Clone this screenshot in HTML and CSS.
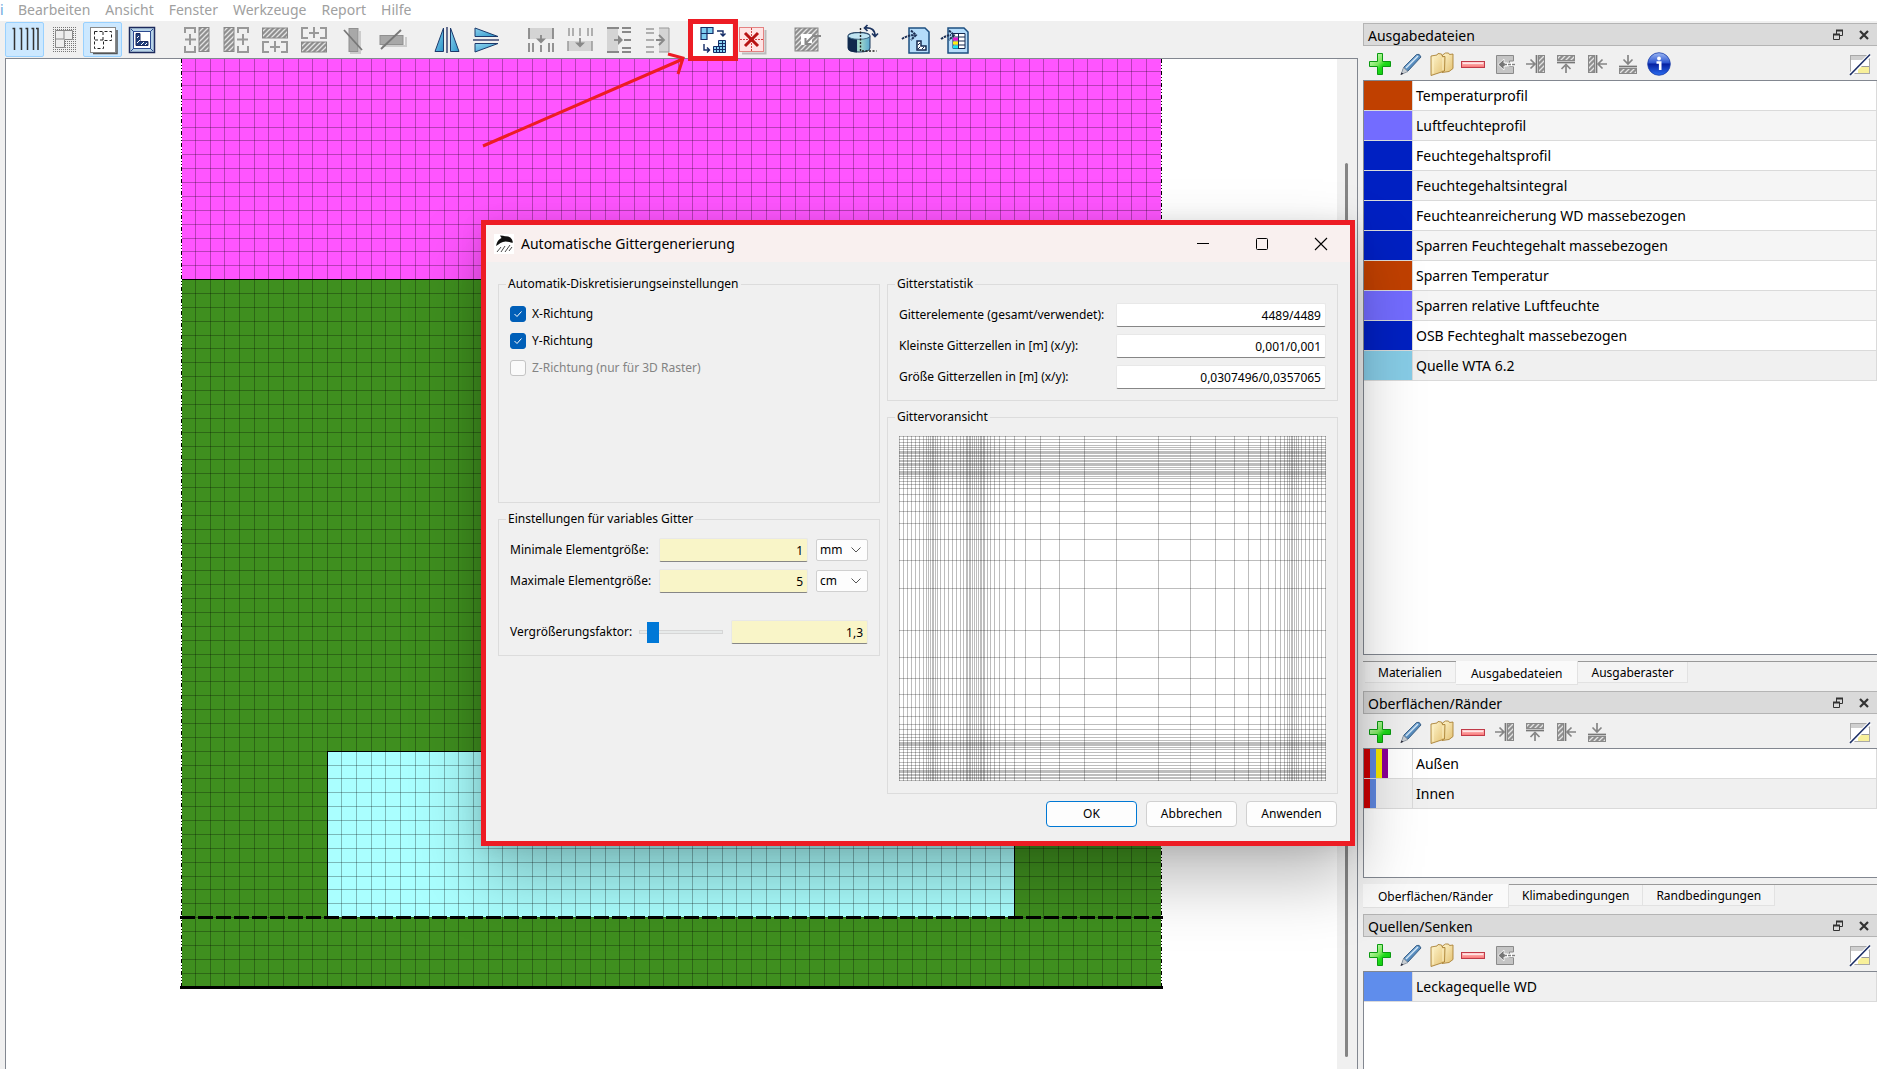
FILE: index.html
```html
<!DOCTYPE html>
<html lang="de">
<head>
<meta charset="utf-8">
<title>Automatische Gittergenerierung</title>
<link rel="stylesheet" href="styles.css">
</head>
<body>
<svg class="defs" width="0" height="0" aria-hidden="true">
  <defs>
    <linearGradient id="g-plus" x1="0" y1="0" x2="1" y2="1"><stop offset="0" stop-color="#e4ffd8"/><stop offset=".45" stop-color="#7de860"/><stop offset=".6" stop-color="#1fdc1a"/><stop offset="1" stop-color="#08b808"/></linearGradient>
    <linearGradient id="g-minus" x1="0" y1="0" x2="0" y2="1"><stop offset="0" stop-color="#ffd0d0"/><stop offset="1" stop-color="#f87070"/></linearGradient>
    <linearGradient id="g-folder" x1="0" y1="0" x2="1" y2="1"><stop offset="0" stop-color="#fff6cf"/><stop offset="1" stop-color="#e3c070"/></linearGradient>
    <linearGradient id="g-pen" x1="0" y1="0" x2="1" y2="1"><stop offset="0" stop-color="#a8cbe8"/><stop offset=".5" stop-color="#5c92c4"/><stop offset="1" stop-color="#27507e"/></linearGradient>
    <linearGradient id="g-info" x1="0" y1="0" x2="0" y2="1"><stop offset="0" stop-color="#9db8f4"/><stop offset=".45" stop-color="#2c55d0"/><stop offset=".5" stop-color="#0620a0"/><stop offset="1" stop-color="#2a6cf0"/></linearGradient>
    <linearGradient id="g-cyl" x1="0" y1="0" x2="1" y2="0"><stop offset="0" stop-color="#2d8fc4"/><stop offset=".5" stop-color="#a8dcc8"/><stop offset="1" stop-color="#5aa8d0"/></linearGradient>
    <linearGradient id="g-tri" x1="0" y1="0" x2="1" y2="1"><stop offset="0" stop-color="#8fd4f0"/><stop offset="1" stop-color="#2c94c8"/></linearGradient>
    <pattern id="p-hatch" width="5" height="5" patternUnits="userSpaceOnUse"><rect width="5" height="5" fill="#8f8f8f"/><path d="M-1 6L6-1M-1 1L1-1M4 6L6 4" stroke="#e4e4e4" stroke-width="1.3"/></pattern>
    <pattern id="p-dots" width="2" height="2" patternUnits="userSpaceOnUse"><rect width="1" height="1" fill="#777"/></pattern>

    <symbol id="i-plus" viewBox="0 0 24 24"><path d="M9.500 1.500h5v8h8v5h-8v8h-5v-8h-8v-5h8z" fill="url(#g-plus)" stroke="#0a9a10"/></symbol>
    <symbol id="i-pen" viewBox="0 0 24 24"><path d="M3 21l2-6L17.500 2.500q3-1.500 4.500 2.500L9 19z" fill="url(#g-pen)" stroke="#3d6288"/><path d="M7 16L19 4" stroke="#d6e8f6" stroke-width="1.500"/><path d="M2 22.500l2.500-7 4.500 4z" fill="#c8cdd2" stroke="#7c8894" stroke-width=".7"/><path d="M1.500 23l1-2.500 2 1.200z" fill="#223"/></symbol>
    <symbol id="i-folder" viewBox="0 0 24 24"><path d="M12.500 3l3-2h3l1 1.500 3.500-.5v14.500l-4 3-7 1z" fill="url(#g-folder)" stroke="#a98136" stroke-width=".9"/><path d="M1 4l6-1 1-1.500 3.500.5 1 2.500h2.500l-.5 14.500L4 22.500l-3 1z" fill="url(#g-folder)" stroke="#a98136" stroke-width=".9"/><path d="M3 21.500V6.500M13 6v12" fill="none" stroke="#fff3c8"/></symbol>
    <symbol id="i-minus" viewBox="0 0 24 24"><rect x=".5" y="9.500" width="23" height="6" fill="url(#g-minus)" stroke="#c03a48"/><rect x="2" y="10.500" width="20" height="1.500" fill="#ffe4e4"/></symbol>
    <symbol id="i-assign" viewBox="0 0 24 24"><path d="M4.500 21.500v-18h17v5.500h-4v5.500h4v7z" fill="#c4c4c4" stroke="#8a8a8a"/><path d="M6 12.500l6-5.500v4h3v3h-3V18z" fill="#777" stroke="#fff" stroke-width=".8"/><path d="M13 12.500h10" stroke="#fff" stroke-width="3.500"/><path d="M12 12.500h11" stroke="#808080" stroke-width="1.500" stroke-dasharray="3 1"/></symbol>
    <symbol id="i-left" viewBox="0 0 24 24"><path d="M3 12h8M7.500 7.500L12 12l-4.500 4.500" fill="none" stroke="#858585" stroke-width="1.700"/><path d="M13.500 3v18" stroke="#777" stroke-width="1.700"/><rect x="15.500" y="3.500" width="6" height="17" fill="url(#p-hatch)" stroke="#888"/></symbol>
    <symbol id="i-top" viewBox="0 0 24 24"><rect x="3.500" y="3.500" width="17" height="5" fill="url(#p-hatch)" stroke="#888"/><path d="M3 10.500h18" stroke="#777" stroke-width="1.700"/><path d="M12 21v-7M7.500 17l4.500-4.500 4.500 4.500" fill="none" stroke="#858585" stroke-width="1.700"/></symbol>
    <symbol id="i-right" viewBox="0 0 24 24"><rect x="3.500" y="3.500" width="6" height="17" fill="url(#p-hatch)" stroke="#888"/><path d="M11.500 3v18" stroke="#777" stroke-width="1.700"/><path d="M22 12h-8M17.500 7.500L13 12l4.500 4.500" fill="none" stroke="#858585" stroke-width="1.700"/></symbol>
    <symbol id="i-bottom" viewBox="0 0 24 24"><path d="M12 3v8M7.500 7.500L12 12l4.500-4.500" fill="none" stroke="#858585" stroke-width="1.700"/><path d="M3 14.500h18" stroke="#777" stroke-width="1.700"/><rect x="3.500" y="16.500" width="17" height="5" fill="url(#p-hatch)" stroke="#888"/></symbol>
    <symbol id="i-info" viewBox="0 0 24 24"><circle cx="12" cy="12" r="11.300" fill="url(#g-info)" stroke="#1c3fa8" stroke-width=".8"/><circle cx="12" cy="6.500" r="1.900" fill="#fff"/><path d="M9.500 10.500h3.700V18" fill="none" stroke="#fff" stroke-width="2.600"/></symbol>
    <symbol id="i-edit" viewBox="0 0 24 24"><rect x="2.500" y="3.500" width="19" height="18" fill="#fff" stroke="#a8a8a8"/><rect x="3" y="4" width="18" height="4" fill="#cfcfcf"/><rect x="10" y="15" width="11" height="6" fill="#f8f09a"/><path d="M12 14.500h9" stroke="#999"/><path d="M3 22L22 3" stroke="#fff" stroke-width="4"/><path d="M2 23L22 2.500" stroke="#1c2f66" stroke-width="1.600"/></symbol>
    <symbol id="i-float" viewBox="0 0 12 12"><path d="M4.500 1.500h6v5h-6z" fill="none" stroke="#333"/><path d="M4 1.500h7" stroke="#333" stroke-width="2"/><path d="M1.500 5.500h6v5h-6z" fill="#dadada" stroke="#333"/><path d="M1 5.500h7" stroke="#333" stroke-width="2"/></symbol>
    <symbol id="i-close" viewBox="0 0 12 12"><path d="M2 2l8 8M10 2l-8 8" stroke="#333" stroke-width="2.200"/></symbol>
  </defs>
</svg>

<div class="app">
  <nav class="menubar">
    <a class="cut" href="#">i</a><a href="#">Bearbeiten</a><a href="#">Ansicht</a><a href="#">Fenster</a><a href="#">Werkzeuge</a><a href="#">Report</a><a href="#">Hilfe</a>
  </nav>

  <div class="workspace">
    <main class="editor">
      <div class="toolbar" role="toolbar">
        <div class="group">
          <button class="active" aria-label="Raster"><svg viewBox="0 0 26 26"><path d="M.5 1.500h2V23M7.500 1.500h2V23M13.500 1.500h2V23M19.500 1.500h2V23M24 1.500h2V23" fill="none" stroke="#333" stroke-width="1.500"/></svg></button>
          <button aria-label="Material"><svg viewBox="0 0 26 26"><rect x="1" width="25" height="25" fill="url(#p-dots)"/><path d="M4.500 3.500h17v9h-8v8h-9z" fill="#eee" stroke="#888"/><path d="M13 4v8M5 12h8" stroke="#888"/></svg></button>
          <button class="active" aria-label="Raster im Bauteil"><svg viewBox="0 0 26 26"><path d="M3 26.500h24V3" fill="none" stroke="#555" stroke-width="1.500"/><rect x=".5" y=".5" width="25" height="25" fill="#fff" stroke="#888"/><path d="M4.500 4.500h17v9h-8v8h-9zM13 5v8M5 13h8" fill="none" stroke="#222" stroke-dasharray="3 2"/></svg></button>
          <button aria-label="Ränder"><svg viewBox="0 0 26 26"><rect x=".5" y=".5" width="25" height="25" fill="#b8d4e8" stroke="#1c2a5c" stroke-width="1.500"/><path d="M2 2l3 3M24 2l-3 3M2 24l3-3M24 24l-3-3" stroke="#2c4a90"/><rect x="4.500" y="4.500" width="17" height="17" fill="#fff" stroke="#2c4a90"/><path d="M7 6.500h4v8h8v4H7z" fill="#20407c" stroke="#1c2a5c"/><path d="M8 11l2-2M8 16l3-3M12 18l3-3M16 18l2-2" stroke="#fff"/></svg></button>
        </div>
        <div class="group">
          <button aria-label="Spalte links"><svg viewBox="0 0 26 26"><path d="M1 6V1h10v5M1 19v6h10v-6M6 7v11M1 12.500h11" fill="none" stroke="#999" stroke-width="2"/><rect x="15" y=".5" width="10" height="24" fill="url(#p-hatch)" stroke="#888"/></svg></button>
          <button aria-label="Spalte rechts"><svg viewBox="0 0 26 26"><path d="M15 6V1h10v5M15 19v6h10v-6M20 7v11M14 12.500h11" fill="none" stroke="#999" stroke-width="2"/><rect x="1" y=".5" width="10" height="24" fill="url(#p-hatch)" stroke="#888"/></svg></button>
          <button aria-label="Zeile oben"><svg viewBox="0 0 26 26"><rect x=".5" y="1" width="25" height="10" fill="url(#p-hatch)" stroke="#888"/><path d="M7 15H1v10h6M19 15h6v10h-6M13 14v11M8 20h10" fill="none" stroke="#999" stroke-width="2"/></svg></button>
          <button aria-label="Zeile unten"><svg viewBox="0 0 26 26"><rect x=".5" y="15" width="25" height="10" fill="url(#p-hatch)" stroke="#888"/><path d="M7 1H1v10h6M19 1h6v10h-6M13 0v11M8 6h10" fill="none" stroke="#999" stroke-width="2"/></svg></button>
          <button aria-label="Spalte löschen"><svg viewBox="0 0 26 26"><path d="M10 26h10V4" fill="none" stroke="#ccc" stroke-width="2"/><rect x="9" y="1.500" width="9" height="23" fill="#a8a8a8" stroke="#909090"/><path d="M4 3l18 20" stroke="#777" stroke-width="1.800"/></svg></button>
          <button aria-label="Zeile löschen"><svg viewBox="0 0 26 26"><path d="M3 19h24v-9" fill="none" stroke="#ccc" stroke-width="2"/><rect x="1" y="8.500" width="23" height="9" fill="#a8a8a8" stroke="#909090"/><path d="M2 22L22 3" stroke="#777" stroke-width="1.800"/></svg></button>
        </div>
        <div class="group">
          <button aria-label="Horizontal spiegeln"><svg viewBox="0 0 26 26"><path d="M13 0v26" stroke="#1c2a5c" stroke-width="1.300"/><path d="M9.500 1v23.500H1z" fill="url(#g-tri)" stroke="#1c3a6c"/><path d="M16.500 1v23.500H25z" fill="url(#g-tri)" stroke="#1c3a6c"/></svg></button>
          <button aria-label="Vertikal spiegeln"><svg viewBox="0 0 26 26"><path d="M0 13h26" stroke="#1c2a5c" stroke-width="1.300"/><path d="M2 9.500h23L2 1z" fill="url(#g-tri)" stroke="#1c3a6c"/><path d="M2 16.500h23L2 25z" fill="url(#g-tri)" stroke="#1c3a6c"/></svg></button>
        </div>
        <div class="group">
          <button aria-label="Spalten verfeinern"><svg viewBox="0 0 26 26"><rect x="1" y="1" width="24" height="11" fill="#d4d4d4"/><path d="M1 12V1M25 12V1M1 16v9M5 16v9M13 18v7M21 16v9M25 16v9" stroke="#888" stroke-width="1.800"/><path d="M13 8v6" stroke="#888" stroke-width="1.800"/><path d="M8 11.500h10l-5 5z" fill="#888"/></svg></button>
          <button aria-label="Spalten vergröbern"><svg viewBox="0 0 26 26"><rect x="1" y="14" width="24" height="10" fill="#d4d4d4"/><path d="M1 14v10M25 14v10M2 1v8M6 1v8M13 1v8M21 1v8M25 1v8" stroke="#999" stroke-width="1.500"/><path d="M13 11v6" stroke="#888" stroke-width="1.800"/><path d="M8 15.500h10l-5 5z" fill="#888"/></svg></button>
          <button aria-label="Zeilen verfeinern"><svg viewBox="0 0 26 26"><rect x="1" y="1" width="11" height="24" fill="#d4d4d4"/><path d="M1 1h12M1 25h12M16 1h9M16 5h9M18 13h7M16 21h9M16 25h9" stroke="#888" stroke-width="1.800"/><path d="M8 13h6" stroke="#888" stroke-width="1.800"/><path d="M12 8v10l5-5z" fill="#888"/></svg></button>
          <button aria-label="Zeilen vergröbern"><svg viewBox="0 0 26 26"><rect x="14" y="1" width="10" height="24" fill="#d4d4d4"/><path d="M14 1h10v24H14" fill="none" stroke="#999"/><path d="M1 2h8M1 6h8M1 13h8M1 20h8M1 25h8" stroke="#999" stroke-width="1.500"/><path d="M11 13h8M14 8l5 5-5 5" fill="none" stroke="#888" stroke-width="1.800"/></svg></button>
        </div>
        <div class="group">
          <button class="hot" aria-label="Automatische Gittergenerierung"><svg viewBox="0 0 26 26"><path d="M1 .5h12v6H7v6H1z" fill="#7ccdf0" stroke="#142c66" stroke-width="1.200"/><path d="M7 1v6M1 6.500h6" stroke="#142c66" stroke-width="1.200"/><path d="M17 4h6v5M20.500 6.500L23 9l2.500-2.500M4 17v6h5M7 20.500L9.500 23 7 25.500" fill="none" stroke="#142c66" stroke-width="1.400"/><path d="M18.500 13.500h7v12h-12v-6h5z" fill="#8ad4f4" stroke="#142c66"/><path d="M14 22.500h11M18 19.500h7M19 16.500h6M16.500 20v5M19.500 19v6M22.500 14v11" stroke="#142c66"/></svg></button>
          <button aria-label="Raster löschen"><svg viewBox="0 0 26 26"><path d="M3 26.500h23.500V3" fill="none" stroke="#bbb" stroke-width="2"/><rect x="0" y="0" width="25" height="25" fill="#ffe4e4"/><path d="M.5.500h24v24H.5z" fill="none" stroke="#c82020" stroke-dasharray="1 1"/><path d="M12.500 1v24M1 12.500h24" stroke="#d04040" stroke-dasharray="2 1"/><path d="M6 6l13 13M19 6L6 19" stroke="#b81414" stroke-width="3"/></svg></button>
        </div>
        <div class="group">
          <button aria-label="Bereich füllen"><svg viewBox="0 0 26 26"><rect x="1" y="1" width="23" height="23" fill="url(#p-hatch)" stroke="#888"/><rect x="7" y="7" width="11" height="11" fill="#fff"/><path d="M27 9h-8l-7 7M11.500 11v6h6" fill="none" stroke="#888" stroke-width="2"/></svg></button>
        </div>
        <div class="group">
          <button aria-label="Achse drehen"><svg viewBox="0 0 26 26"><path d="M-1 9q0-3.500 11-3.500T21 9v12q0 4-11 4-11 0-11-4z" fill="url(#g-cyl)" stroke="#1c3a5c"/><path d="M-1 10q3 2.500 9 2.500V25.500q-9-.5-9-4z" fill="#10284c"/><ellipse cx="10" cy="9" rx="11" ry="3.300" fill="#bfe4f2" stroke="#1c3a5c" stroke-width=".7"/><path d="M11.500 1v23h16" fill="none" stroke="#222" stroke-width="1.400" stroke-dasharray="2 1.500"/><path d="M16 1q10-1 10 8M18.500-2l-3 3 3 3M23 6.500l3 3 3-3" fill="none" stroke="#1c3460" stroke-width="1.700"/></svg></button>
        </div>
        <div class="group">
          <button aria-label="Bauteil exportieren"><svg viewBox="0 0 26 26"><path d="M5 1h16l4 4v21H5z" fill="#b4dcfa" stroke="#1d4f80" stroke-width="1.500"/><path d="M-2 12q5-3.500 12-4M7 3.500L12 8l-5 5" fill="none" stroke="#1c2f55" stroke-width="2" stroke-dasharray="2.500 .8"/><path d="M13 14h4v5h5v4h-9z" fill="#fff" stroke="#142850" stroke-width="1.500"/><path d="M14 18l2-2M14 22l2-2M18 22l2-2" stroke="#142850"/></svg></button>
          <button aria-label="Tabelle exportieren"><svg viewBox="0 0 26 26"><path d="M5 1h16l4 4v21H5z" fill="#b4dcfa" stroke="#1d4f80" stroke-width="1.500"/><path d="M10 6.500h12v15H10zM10 10h12M10 14h12M10 18h12M15.500 6v15" fill="#fff" stroke="#142850"/><path d="M10 10.500h5v3h-5z" fill="#e018d0"/><path d="M10 14.500h5v3h-5z" fill="#ffee10"/><path d="M10 18.500h5v3h-5z" fill="#18e0f0"/><path d="M-2 12q5-3.500 10-4M6 3.500L11 8l-5 5" fill="none" stroke="#1c2f55" stroke-width="2" stroke-dasharray="2.500 .8"/></svg></button>
        </div>
      </div>
      <div class="canvas">
        <svg id="model" class="model" shape-rendering="crispEdges"></svg>
        <div class="scrolltrack"><div class="scrollthumb"></div></div>
      </div>
    </main>

    <aside class="docks">
      <section class="dock grow">
        <header><h2>Ausgabedateien</h2><button aria-label="Abdocken"><svg><use href="#i-float"/></svg></button><button aria-label="Schließen"><svg><use href="#i-close"/></svg></button></header>
        <div class="docktools">
          <button aria-label="Neu"><svg><use href="#i-plus"/></svg></button><button aria-label="Bearbeiten"><svg><use href="#i-pen"/></svg></button><button aria-label="Kopieren"><svg><use href="#i-folder"/></svg></button><button aria-label="Löschen"><svg><use href="#i-minus"/></svg></button><button aria-label="Zuweisen"><svg><use href="#i-assign"/></svg></button><button aria-label="Links"><svg><use href="#i-left"/></svg></button><button aria-label="Oben"><svg><use href="#i-top"/></svg></button><button aria-label="Rechts"><svg><use href="#i-right"/></svg></button><button aria-label="Unten"><svg><use href="#i-bottom"/></svg></button><button aria-label="Info"><svg><use href="#i-info"/></svg></button><button class="end" aria-label="Ansicht"><svg><use href="#i-edit"/></svg></button>
        </div>
        <div class="list">
          <table>
            <tr><td class="swatch rust"></td><td>Temperaturprofil</td></tr>
            <tr><td class="swatch violet"></td><td>Luftfeuchteprofil</td></tr>
            <tr><td class="swatch blue"></td><td>Feuchtegehaltsprofil</td></tr>
            <tr><td class="swatch blue"></td><td>Feuchtegehaltsintegral</td></tr>
            <tr><td class="swatch blue"></td><td>Feuchteanreicherung WD massebezogen</td></tr>
            <tr><td class="swatch blue"></td><td>Sparren Feuchtegehalt massebezogen</td></tr>
            <tr><td class="swatch rust"></td><td>Sparren Temperatur</td></tr>
            <tr><td class="swatch violet"></td><td>Sparren relative Luftfeuchte</td></tr>
            <tr><td class="swatch blue"></td><td>OSB Fechteghalt massebezogen</td></tr>
            <tr class="last"><td class="swatch sky"></td><td>Quelle WTA 6.2</td></tr>
          </table>
        </div>
        <div class="tabs"><button>Materialien</button><button class="selected">Ausgabedateien</button><button>Ausgaberaster</button></div>
      </section>

      <section class="dock">
        <header><h2>Oberflächen/Ränder</h2><button aria-label="Abdocken"><svg><use href="#i-float"/></svg></button><button aria-label="Schließen"><svg><use href="#i-close"/></svg></button></header>
        <div class="docktools">
          <button aria-label="Neu"><svg><use href="#i-plus"/></svg></button><button aria-label="Bearbeiten"><svg><use href="#i-pen"/></svg></button><button aria-label="Kopieren"><svg><use href="#i-folder"/></svg></button><button aria-label="Löschen"><svg><use href="#i-minus"/></svg></button><button aria-label="Links"><svg><use href="#i-left"/></svg></button><button aria-label="Oben"><svg><use href="#i-top"/></svg></button><button aria-label="Rechts"><svg><use href="#i-right"/></svg></button><button aria-label="Unten"><svg><use href="#i-bottom"/></svg></button><button class="end" aria-label="Ansicht"><svg><use href="#i-edit"/></svg></button>
        </div>
        <div class="list medium">
          <table>
            <tr><td class="swatch bands-four"></td><td>Außen</td></tr>
            <tr class="last"><td class="swatch bands-two"></td><td>Innen</td></tr>
          </table>
        </div>
        <div class="tabs wide"><button class="selected">Oberflächen/Ränder</button><button>Klimabedingungen</button><button>Randbedingungen</button></div>
      </section>

      <section class="dock">
        <header><h2>Quellen/Senken</h2><button aria-label="Abdocken"><svg><use href="#i-float"/></svg></button><button aria-label="Schließen"><svg><use href="#i-close"/></svg></button></header>
        <div class="docktools">
          <button aria-label="Neu"><svg><use href="#i-plus"/></svg></button><button aria-label="Bearbeiten"><svg><use href="#i-pen"/></svg></button><button aria-label="Kopieren"><svg><use href="#i-folder"/></svg></button><button aria-label="Löschen"><svg><use href="#i-minus"/></svg></button><button aria-label="Zuweisen"><svg><use href="#i-assign"/></svg></button><button class="end" aria-label="Ansicht"><svg><use href="#i-edit"/></svg></button>
        </div>
        <div class="list small">
          <table>
            <tr class="last"><td class="swatch cornflower"></td><td>Leckagequelle WD</td></tr>
          </table>
        </div>
      </section>
    </aside>
  </div>
</div>

<div class="dialog" role="dialog" aria-labelledby="dialog-title">
  <div class="titlebar">
    <svg class="logo" viewBox="0 0 20 20"><rect width="20" height="20" fill="#fff"/><path d="M2 12Q3 6 7.500 4L6 1.500q3.500 0 5 .8 5-.3 7 3.200l1 3q-1.500.5-3.500-.5Q10 6.500 6.500 9q-2 1.500-4.500 3z" fill="#111"/><path d="M3 18l4-5M7 18l4-6M11 18l5-7M15 17l3-4" stroke="#333" stroke-width=".9"/></svg>
    <h1 id="dialog-title">Automatische Gittergenerierung</h1>
    <button aria-label="Minimieren"><svg viewBox="0 0 14 14"><path d="M1 6.500h12" stroke="#000"/></svg></button>
    <button aria-label="Maximieren"><svg viewBox="0 0 14 14"><rect x="1.500" y="1.500" width="11" height="11" rx="1" fill="none" stroke="#000"/></svg></button>
    <button aria-label="Schließen"><svg viewBox="0 0 14 14"><path d="M1 1l12 12M13 1L1 13" stroke="#000" stroke-width="1.100"/></svg></button>
  </div>
  <div class="dialogbody">
    <div class="column left">
      <fieldset class="auto">
        <legend>Automatik-Diskretisierungseinstellungen</legend>
        <div class="checks">
          <label><input type="checkbox" checked>X-Richtung</label>
          <label><input type="checkbox" checked>Y-Richtung</label>
          <label class="off"><input type="checkbox" disabled>Z-Richtung (nur für 3D Raster)</label>
        </div>
      </fieldset>
      <fieldset class="variable">
        <legend>Einstellungen für variables Gitter</legend>
        <div class="fields">
          <label for="min">Minimale Elementgröße:</label><input id="min" type="text" value="1"><select aria-label="Einheit Minimum"><option>mm</option></select>
          <label for="max">Maximale Elementgröße:</label><input id="max" type="text" value="5"><select aria-label="Einheit Maximum"><option>cm</option></select>
        </div>
        <div class="factor">
          <label for="factor">Vergrößerungsfaktor:</label><input type="range" aria-label="Vergrößerungsfaktor" min="0" max="100" value="10"><input id="factor" type="text" value="1,3">
        </div>
      </fieldset>
    </div>
    <div class="column right">
      <fieldset class="stats">
        <legend>Gitterstatistik</legend>
        <div class="fields">
          <label for="count">Gitterelemente (gesamt/verwendet):</label><input id="count" type="text" readonly value="4489/4489">
          <label for="smallest">Kleinste Gitterzellen in [m] (x/y):</label><input id="smallest" type="text" readonly value="0,001/0,001">
          <label for="largest">Größe Gitterzellen in [m] (x/y):</label><input id="largest" type="text" readonly value="0,0307496/0,0357065">
        </div>
      </fieldset>
      <fieldset class="preview">
        <legend>Gittervoransicht</legend>
        <svg id="preview" viewBox="0 0 427 345" shape-rendering="crispEdges"></svg>
      </fieldset>
      <div class="actions"><button class="primary">OK</button><button>Abbrechen</button><button>Anwenden</button></div>
    </div>
  </div>
</div>

<svg class="annotation" width="300" height="140" aria-hidden="true"><g fill="none" stroke="#ed1c24"><rect x="210.500" y="4.500" width="45" height="37" stroke-width="5"/><path d="M3 129L203 42" stroke-width="3"/><path d="M188 37l15 4-5 16" stroke-width="3"/></g></svg>
<script src="grid.js"></script>
</body>
</html>
```
FILE: grid.js
```js
const NS = 'http://www.w3.org/2000/svg';

function shape(parent, name, attrs) {
  const node = document.createElementNS(NS, name);
  for (const key in attrs) node.setAttribute(key, attrs[key]);
  parent.appendChild(node);
}

function rect(parent, x, y, width, height, fill) {
  shape(parent, 'rect', { x, y, width, height, fill });
}

// Cross-section of the component with its 67 x 67 element grid
const model = document.getElementById('model');
const left = 175, right = 1155, bottom = 928;
const stepX = 980 / 67, stepY = 13.87;
const lineX = i => Math.floor(left + i * stepX);
const lineY = i => Math.floor(bottom - i * stepY);

rect(model, left, 0, right - left, bottom, '#3f8f1f');
rect(model, left, 0, right - left, lineY(51), '#ff55ff');
rect(model, lineX(10), lineY(17), lineX(57) - lineX(10), lineY(5) - lineY(17), '#aaffff');

for (let i = 1; i < 67; i++) {
  rect(model, lineX(i), 0, 1, bottom, 'rgba(0,0,0,0.28)');
  rect(model, left, lineY(i), right - left, 1, 'rgba(0,0,0,0.28)');
}

rect(model, left, lineY(51), right - left, 1, '#000');
rect(model, lineX(10), lineY(17), lineX(57) - lineX(10), 1, '#000');
rect(model, lineX(10), lineY(17), 1, lineY(5) - lineY(17), '#000');
rect(model, lineX(57), lineY(17), 1, lineY(5) - lineY(17), '#000');

for (const x of [left + 0.5, right + 0.5]) {
  shape(model, 'path', { d: `M${x} 0V${bottom}`, stroke: '#fff' });
  shape(model, 'path', { d: `M${x} 0V${bottom}`, stroke: '#000', 'stroke-dasharray': '4 2 1 2 1 2' });
}
shape(model, 'path', { d: `M${left - 1} ${lineY(5) + 0.5}H${right + 2}`, stroke: '#000', 'stroke-width': 3, 'stroke-dasharray': '15 3' });
rect(model, left - 1, bottom - 1, right - left + 3, 3, '#000');

// Preview of the generated grid
const preview = document.getElementById('preview');
const columns = [0, 4, 8, 12, 16, 20, 24, 27, 29, 31, 33, 34, 36, 38, 41, 45, 49, 53, 57, 61, 64, 67, 68, 70, 71, 73, 75, 77, 79, 81, 82, 84, 85, 88, 91, 95, 100, 106, 115, 126, 141, 160, 185, 217, 259, 291, 316, 335, 349, 361, 369, 376, 381, 385, 388, 390, 392, 393, 395, 397, 399, 402, 406, 410, 414, 418, 422, 426];
const rows = [0, 3, 6, 9, 11, 13, 15, 16, 17, 19, 20, 22, 24, 25, 27, 28, 29, 31, 33, 35, 36, 37, 38, 40, 42, 45, 48, 52, 58, 65, 75, 87, 103, 124, 152, 194, 221, 242, 258, 271, 280, 288, 293, 298, 301, 304, 306, 307, 308, 309, 311, 313, 316, 319, 322, 326, 329, 332, 334, 335, 336, 338, 339, 341, 342, 344];
rect(preview, 0, 0, 427, 345, '#fff');
for (const x of columns) rect(preview, x, 0, 1, 345, 'rgba(0,0,0,0.26)');
for (const y of rows) rect(preview, 0, y, 427, 1, 'rgba(0,0,0,0.26)');
```
FILE: styles.css
```css
* { box-sizing: border-box; }

body {
  margin: 0;
  height: 100vh;
  overflow: hidden;
  font: 12px/18px "Noto Sans", "Open Sans", sans-serif;
  color: #000;
  background: #f0f0f0;
}

button, input, select { font: inherit; color: inherit; margin: 0; }
button { padding: 0; border: 0; background: none; }
h1, h2 { margin: 0; font-weight: normal; }
.defs { position: absolute; }

.app { display: flex; flex-direction: column; height: 100%; }

.menubar {
  display: flex;
  flex: none;
  gap: 15px;
  height: 21px;
  background: #fff;
  font-size: 14px;
  line-height: 20px;
}
.menubar a { color: #a0a0a0; text-decoration: none; }
.menubar .cut { width: 3px; color: #6aa4dc; }

.workspace { display: flex; flex: 1; min-height: 0; }
.editor { display: flex; flex: 1; flex-direction: column; min-width: 0; padding-left: 5px; }

.toolbar { display: flex; flex: none; gap: 16px; height: 37px; padding-top: 1px; }
.group { display: flex; }
.toolbar button {
  display: grid;
  place-items: center;
  width: 39px;
  height: 35px;
  border: 1px solid transparent;
  border-radius: 2px;
}
.toolbar svg { width: 26px; height: 26px; overflow: visible; }
.toolbar .active { background: #cce8ff; border-color: #99d1ff; }
.toolbar .hot { background: #fff; }

.canvas {
  display: flex;
  flex: 1;
  min-height: 0;
  background: #fff;
  border: 1px solid #828790;
  border-bottom: 0;
}
.model { flex: 1; min-width: 0; height: 100%; }
.scrolltrack { width: 20px; padding: 104px 9px 12px 8px; background: #f0f0f0; }
.scrollthumb { height: 100%; border-radius: 2px; background: #858585; }

.docks { display: flex; flex: none; flex-direction: column; gap: 6px; width: 519px; padding: 2px 0 0 5px; }
.dock { display: flex; flex: none; flex-direction: column; }
.dock.grow { flex: 1; min-height: 0; }
.dock header {
  display: flex;
  align-items: center;
  gap: 14px;
  height: 23px;
  padding: 0 7px 0 4px;
  background: #dadada;
  border: 1px solid #b4b4b4;
  border-right: 0;
}
.dock h2 { flex: 1; font-size: 14px; line-height: 20px; padding-top: 2px; }
.dock header button, .dock header svg { display: block; width: 12px; height: 12px; }

.docktools { display: flex; align-items: center; gap: 7px; height: 34px; padding: 2px 5px 0; }
.docktools button, .docktools svg { display: block; width: 24px; height: 24px; }
.docktools .end { margin-left: auto; }

.list { background: #fff; border: solid #828790; border-width: 1px 0 1px 1px; }
.grow .list { flex: 1; min-height: 0; }
.list.medium { height: 130px; }
.list.small { height: 98px; border-bottom: 0; }
.list table { width: 100%; border-collapse: separate; border-spacing: 0; font-size: 14px; line-height: 20px; }
.list td { height: 30px; padding: 0 3px; border: solid #dadada; border-width: 0 1px 1px 0; }
.list tr:nth-child(even) { background-color: #f5f5f5; }
.list tr.last { background-color: #f0f0f0; }
.list .swatch { width: 49px; padding: 0; }
.rust { background-color: #c04000; }
.violet { background-color: #736cff; }
.blue { background-color: #0020c2; }
.sky { background-color: #87cce6; }
.cornflower { background-color: #5f8dec; }
.bands-four { background-image: linear-gradient(90deg, #cc0000 6px, #5f88e0 6px 12px, #f8e800 12px 18px, #8b0096 18px 24px, transparent 24px); }
.bands-two { background-image: linear-gradient(90deg, #cc0000 6px, #5f88e0 6px 12px, transparent 12px); }

.tabs { display: flex; align-items: flex-start; height: 24px; margin-top: 6px; padding-left: 2px; border-top: 1px solid #999; }
.tabs button { height: 21px; padding: 0 13px; background: #f4f4f4; border: solid #e2e2e2; border-width: 0 1px 1px 0; line-height: 22px; }
.tabs .selected { height: 24px; margin-top: -1px; padding: 0 15px; background: #fafafa; line-height: 26px; }
.tabs.wide { padding-left: 0; }

.dialog {
  position: absolute;
  left: 481px;
  top: 220px;
  width: 874px;
  background: #f0f0f0;
  border: 5px solid #ed1c24;
  box-shadow: 0 32px 64px rgba(0, 0, 0, .28), 0 2px 20px rgba(0, 0, 0, .1);
}
.titlebar { display: flex; align-items: center; height: 37px; padding-left: 8px; background: #f9f0ef; }
.titlebar .logo { width: 20px; height: 20px; margin-right: 7px; }
.titlebar h1 { flex: 1; font-size: 14px; }
.titlebar button { width: 59px; height: 36px; }
.titlebar button svg { display: block; width: 14px; height: 14px; margin: auto; }

.dialogbody { display: grid; grid-template-columns: 382px 1fr; gap: 7px; padding: 13px 12px 14px; }
.dialogbody label { white-space: nowrap; }
.column { display: flex; flex-direction: column; gap: 7px; }
fieldset { min-width: 0; margin: 0; padding: 0 11px; border: 1px solid #dcdcdc; }
legend { margin-left: -4px; padding: 0 2px; }
.auto { height: 228px; }
.variable { height: 146px; }
.stats { height: 126px; }
.preview { height: 386px; padding-top: 10px; }
.preview svg { display: block; width: 100%; height: 345px; }

.checks { display: flex; flex-direction: column; gap: 9px; padding-top: 12px; }
.checks label { display: flex; align-items: center; gap: 6px; }
.checks .off { color: #838383; }
input[type="checkbox"] {
  appearance: none;
  width: 16px;
  height: 16px;
  border: 1px solid #c4c4c4;
  border-radius: 3px;
  background: #fafafa;
}
input[type="checkbox"]:checked {
  border-color: #005fb8;
  background: #005fb8 url("data:image/svg+xml,%3Csvg xmlns='http://www.w3.org/2000/svg' viewBox='0 0 14 14'%3E%3Cpath d='M3.500 7l2.500 2.500 4.500-5' fill='none' stroke='white'/%3E%3C/svg%3E");
}

.fields { display: grid; grid-template-columns: 141px 149px 52px; gap: 7px 8px; align-items: center; padding-top: 10px; }
.stats .fields { grid-template-columns: 209px 1fr; }
input[type="text"] {
  width: 100%;
  height: 24px;
  padding: 0 4px;
  border: 1px solid #e8e8e8;
  border-bottom-color: #868686;
  border-radius: 2px;
  background: #f9f5c8;
  text-align: right;
}
.fields input[readonly] { background: #fff; }
select {
  appearance: none;
  height: 22px;
  padding: 0 3px;
  border: 1px solid #d0d0d0;
  border-radius: 2px;
  background: #fdfdfd url("data:image/svg+xml,%3Csvg xmlns='http://www.w3.org/2000/svg' width='10' height='6'%3E%3Cpath d='M.5.500L5 5 9.500.500' fill='none' stroke='%23555'/%3E%3C/svg%3E") no-repeat right 6px center;
}
.factor { display: grid; grid-template-columns: 121px 84px 137px; gap: 8px; align-items: center; margin-top: 27px; }
input[type="range"] { appearance: none; width: 100%; height: 22px; background: none; }
input[type="range"]::-webkit-slider-runnable-track { height: 4px; background: #e7eaea; border: 1px solid #d6d6d6; }
input[type="range"]::-webkit-slider-thumb { appearance: none; width: 12px; height: 21px; margin-top: -9px; background: #0078d7; }

.actions { display: flex; justify-content: flex-end; gap: 9px; padding-right: 1px; }
.actions button { width: 91px; height: 26px; border: 1px solid #d0d0d0; border-radius: 4px; background: #fdfdfd; }
.actions .primary { border-color: #0078d4; }

.annotation { position: absolute; left: 480px; top: 17px; pointer-events: none; }
```
